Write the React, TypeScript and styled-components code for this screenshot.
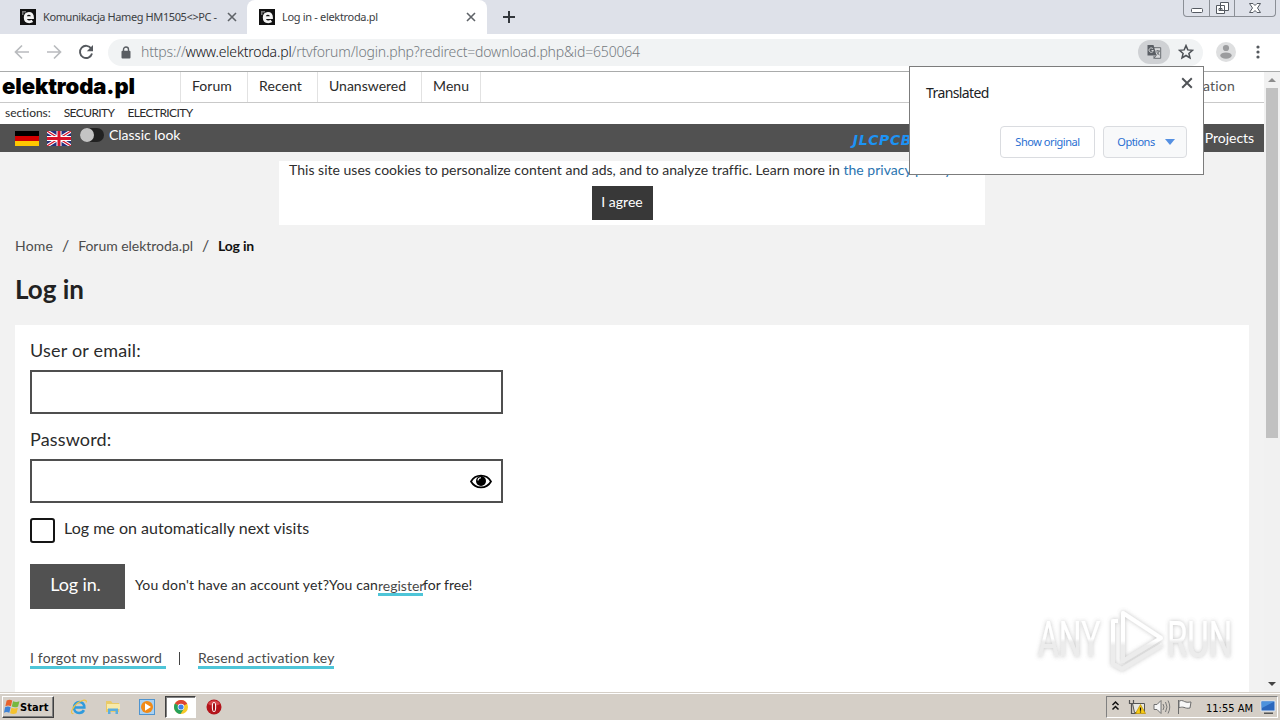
import React from "react";
import styled, { createGlobalStyle } from "styled-components";

const GlobalStyle = createGlobalStyle`
  * { box-sizing: border-box; }
  body { margin: 0; overflow: hidden; background: #fff; }
  button, input { font: inherit; border-radius: 0; margin: 0; }
`;

const ui = `"Noto Sans", "Open Sans", sans-serif`;

const Screen = styled.div`
  position: relative;
  width: 1280px;
  height: 720px;
  display: flex;
  flex-direction: column;
  overflow: hidden;
  font-family: Lato, sans-serif;
  color: #2b2b2b;
  white-space: nowrap;
`;

/* A run of text with tuned size and tracking */
const Label = styled.span<{ $size?: number; $track?: number; $color?: string; $weight?: number }>`
  font-size: ${(p) => p.$size ?? 14}px;
  letter-spacing: ${(p) => p.$track ?? 0}px;
  font-weight: ${(p) => p.$weight ?? 400};
  ${(p) => p.$color && `color: ${p.$color};`}
  white-space: pre;
`;

/* ---------- browser frame ---------- */
const TabStrip = styled.div`
  height: 34px;
  flex: none;
  display: flex;
  background: #dee1e9;
  font-family: ${ui};
`;

const Tab = styled.div<{ $active?: boolean }>`
  width: ${(p) => (p.$active ? 240 : 247)}px;
  padding: 0 ${(p) => (p.$active ? 11 : 10)}px 0 ${(p) => (p.$active ? 12 : 20)}px;
  display: flex;
  align-items: center;
  background: ${(p) => (p.$active ? "#fff" : "transparent")};
  border-radius: 8px 8px 0 0;
  color: #3c4043;
`;

const TabTitle = styled.div`
  flex: 1;
  margin-left: 7px;
  padding-bottom: 2px;
  overflow: hidden;
  line-height: 20px;
`;

const NewTab = styled.div`
  padding-left: 16px;
  flex: 1;
  display: flex;
  align-items: center;
`;

const WindowButtons = styled.div`
  width: 93px;
  height: 17px;
  margin-right: 4px;
  display: flex;
  border: 1px solid #8b8f96;
  border-top: 0;
  border-radius: 0 0 4px 4px;
`;

const WindowButton = styled.div<{ $w: number }>`
  width: ${(p) => p.$w}px;
  display: flex;
  justify-content: center;
  & + & { border-left: 1px solid #8b8f96; }
`;

const Toolbar = styled.div`
  height: 38px;
  flex: none;
  display: flex;
  align-items: center;
  padding: 0 20px 1px 14px;
  border-bottom: 1px solid #a9abab;
  background: #fff;
`;

const NavIcons = styled.div`
  display: flex;
  gap: 16px;
  width: 94px;
`;

const Omnibox = styled.div`
  width: 1095px;
  flex: none;
  height: 27px;
  border-radius: 14px;
  background: #f1f3f4;
  display: flex;
  align-items: center;
  padding: 0 9px 0 13px;
  font-family: ${ui};
  color: #747a80;
`;

const Url = styled.div`
  flex: 1;
  margin-left: 10px;
  padding-bottom: 2px;
  line-height: 24px;
  b { font-weight: inherit; color: #111214; }
`;

const TranslateBadge = styled.div`
  width: 32px;
  height: 24px;
  border-radius: 12px;
  margin-right: 8px;
  background: #cfd1d4;
  display: flex;
  align-items: center;
  justify-content: center;
`;

const ToolbarEnd = styled.div`
  flex: 1;
  display: flex;
  align-items: center;
  justify-content: space-between;
  margin-left: 13px;
`;

/* ---------- web page ---------- */
const Viewport = styled.div`
  height: 620px;
  flex: none;
  display: flex;
`;

const Page = styled.div`
  width: 1264px;
  height: 620px;
  overflow: hidden;
  background: #f2f2f2;
`;

const SiteHeader = styled.header`
  height: 31px;
  display: flex;
  background: #fff;
  border-bottom: 1px solid #c9c9c9;
`;

const Logo = styled.div`
  width: 180px;
  padding-left: 2px;
  font: 900 22px/28px Inter, sans-serif;
  letter-spacing: -0.1px;
  color: #000;
`;

const NavItem = styled.a<{ $w: number }>`
  width: ${(p) => p.$w}px;
  padding-left: 11px;
  line-height: 26px;
  border-left: 1px solid #e2e2e2;
`;

const HeaderRest = styled.div`
  flex: 1;
  border-left: 1px solid #e2e2e2;
  text-align: right;
  line-height: 26px;
  padding-right: 29px;
`;

const Sections = styled.div`
  height: 21px;
  padding-left: 5px;
  display: flex;
  gap: 13px;
  line-height: 20px;
  background: #fff;
`;

const DarkBar = styled.div`
  height: 28px;
  padding: 0 10px 0 15px;
  display: flex;
  align-items: center;
  background: #515151;
  color: #fff;
`;

const Flags = styled.div`
  display: flex;
  gap: 8px;
  margin-right: 9px;
`;

const Toggle = styled.div`
  width: 24px;
  height: 14px;
  margin: 0 5px 6px 0;
  border-radius: 7px;
  background: #222;
  &::before {
    content: "";
    display: block;
    width: 14px;
    height: 14px;
    border-radius: 7px;
    background: #c4c4c4;
  }
`;

const BarText = styled.div<{ $lift: number }>`
  line-height: 20px;
  padding-bottom: ${(p) => p.$lift}px;
`;

const Sponsor = styled.div`
  margin-left: auto;
  width: 352px;
  padding-top: 3px;
  font: italic 700 14px/20px "DejaVu Sans", sans-serif;
  letter-spacing: 0.6px;
  color: #1c93f5;
`;

const Cookies = styled.div`
  width: 706px;
  height: 64px;
  margin: 9px 0 0 279px;
  background: #fff;
  display: flex;
  flex-direction: column;
  align-items: center;
  color: #2e2e2e;
`;

const CookieText = styled.div`
  align-self: stretch;
  padding-left: 10px;
  height: 25px;
  line-height: 15px;
  a { color: #2a74b0; }
`;

const Agree = styled.button`
  width: 61px;
  height: 34px;
  margin-right: 20px;
  padding: 0 0 3px;
  border: 0;
  background: #383838;
  color: #fff;
  line-height: 30px;
`;

const Crumbs = styled.nav`
  padding: 10px 0 0 15px;
  height: 42px;
  line-height: 22px;
  display: flex;
  color: #4c4c4c;
`;

const Slash = styled.span`
  width: 25px;
  text-align: center;
  font-size: 16px;
  line-height: 20px;
`;

const Title = styled.h1`
  margin: 0;
  height: 58px;
  padding: 5px 0 0 15px;
  font-size: 26px;
  line-height: 34px;
  font-weight: 700;
  color: #222;
`;

const Card = styled.main`
  width: 1234px;
  height: 380px;
  margin-left: 15px;
  padding: 15px;
  background: #fff;
`;

const FieldLabel = styled.label`
  display: block;
  height: 30px;
  line-height: 20px;
`;

const Field = styled.div`
  width: 473px;
  height: 44px;
  margin-bottom: 15px;
  padding-right: 9px;
  border: 2px solid #4f4f4f;
  display: flex;
  align-items: center;
  justify-content: flex-end;
`;

const Remember = styled.div`
  height: 46px;
  display: flex;
  gap: 9px;
  line-height: 20px;
`;

const CheckBox = styled.div`
  width: 25px;
  height: 25px;
  border: 2px solid #151515;
  border-radius: 3px;
`;

const SubmitRow = styled.div`
  height: 45px;
  display: flex;
  align-items: center;
  gap: 10px;
`;

const Submit = styled.button`
  width: 95px;
  height: 45px;
  padding: 0 4px 5px 0;
  border: 0;
  background: #515151;
  color: #fff;
`;

const SignUp = styled.div`
  display: flex;
  height: 20px;
  line-height: 18px;
  margin-top: -1px;
`;

const Underlined = styled.a<{ $w: number; $leading?: number }>`
  width: ${(p) => p.$w}px;
  display: block;
  height: 20px;
  line-height: ${(p) => p.$leading ?? 15}px;
  border-bottom: 3px solid #4ec5d8;
  color: #4a4a4a;
`;

const Links = styled.div`
  display: flex;
  margin-top: 40px;
`;

const Divider = styled.div`
  width: 1px;
  height: 13px;
  margin: 3px 18px 0 13px;
  background: #444;
`;

const Scrollbar = styled.div`
  width: 16px;
  background: #f1f1f1;
  display: flex;
  flex-direction: column;
  align-items: center;
  justify-content: space-between;
`;

const ScrollThumb = styled.div`
  width: 12px;
  height: 350px;
  margin-bottom: auto;
  background: #c1c1c1;
`;

/* ---------- overlays ---------- */
const Popup = styled.div`
  position: absolute;
  left: 909px;
  top: 66px;
  width: 295px;
  height: 109px;
  padding: 10px 16px 16px;
  display: flex;
  flex-direction: column;
  justify-content: space-between;
  background: #fff;
  border: 1px solid #7c7c7c;
  font-family: ${ui};
  color: #202124;
`;

const PopupHead = styled.div`
  display: flex;
  justify-content: space-between;
  line-height: 31px;
  margin-right: -6px;
`;

const PopupActions = styled.div`
  display: flex;
  justify-content: flex-end;
  gap: 8px;
`;

const PopupButton = styled.button<{ $w: number; $tint?: boolean }>`
  width: ${(p) => p.$w}px;
  height: 32px;
  padding: 0 0 1px ${(p) => (p.$tint ? 2 : 0)}px;
  display: flex;
  align-items: center;
  justify-content: center;
  gap: 10px;
  border: 1px solid #dadce0;
  border-radius: 4px;
  background: ${(p) => (p.$tint ? "#f8f9fa" : "#fff")};
  color: #2a6fd2;
`;

const Watermark = styled.div`
  position: absolute;
  left: 1032px;
  top: 604px;
`;

/* ---------- taskbar ---------- */
const Taskbar = styled.div`
  height: 28px;
  flex: none;
  display: flex;
  align-items: center;
  padding: 1px 2px 0;
  background: #d5cfc7;
  border-top: 1px solid #d5cfc7;
  box-shadow: inset 0 1px 0 #fff;
  font-family: "DejaVu Sans Condensed", "DejaVu Sans", sans-serif;
  color: #000;
`;

const Start = styled.div`
  width: 52px;
  height: 22px;
  display: flex;
  align-items: center;
  padding-left: 1px;
  border: 1px solid;
  border-color: #fff #404040 #404040 #fff;
  box-shadow: inset -1px -1px 0 #808080;
`;

const Launchers = styled.div`
  display: flex;
  align-items: center;
  margin-left: 8px;
  flex: 1;
`;

const Launcher = styled.div<{ $pressed?: boolean }>`
  width: ${(p) => (p.$pressed ? 31 : 34)}px;
  height: 22px;
  margin-left: ${(p) => (p.$pressed ? 1 : 0)}px;
  display: flex;
  align-items: center;
  justify-content: center;
  ${(p) =>
    p.$pressed &&
    `margin-right: 1px; background: #fff; border: 1px solid; border-color: #404040 #fff #fff #404040; box-shadow: inset 1px 1px 0 #808080;`}
`;

const Tray = styled.div`
  width: 172px;
  height: 22px;
  display: flex;
  align-items: center;
  padding: 0 1px 0 4px;
  border: 1px solid;
  border-color: #808080 #fff #fff #808080;
`;

const Clock = styled.div`
  margin: 0 7px 2px auto;
`;

/* ---------- drawings ---------- */
const Favicon = () => (
  <svg width="16" height="16" viewBox="0 0 16 16">
    <path fill="#111" d="M0 0h16v16H0z" />
    <path fill="none" stroke="#f4f4f4" strokeWidth="2.800" d="M5.300 8.600h7.200c0-2.800-1.300-4.300-3.600-4.300S5.200 6 5.200 8.600c0 2.900 1.500 4.200 4 4.200 1.300 0 2.300-.3 3.200-.9" />
    <path fill="#777" d="M2 2h4v1.500H3.500V6H2z" />
  </svg>
);

const Cross = ({ size, color = "#5f6368", weight = 1.6 }: { size: number; color?: string; weight?: number }) => (
  <svg width={size} height={size} viewBox="0 0 10 10">
    <path d="M1 1l8 8M9 1l-8 8" stroke={color} strokeWidth={weight} />
  </svg>
);

const Arrow = ({ flip }: { flip?: boolean }) => (
  <svg width="16" height="16" viewBox="0 0 16 16" fill="none" stroke="#b9bbbe" strokeWidth="1.700">
    <path d={flip ? "M1 8h13M8 1.500L14.500 8 8 14.500" : "M15 8H2M8 1.500L1.500 8 8 14.500"} />
  </svg>
);

const Reload = () => (
  <svg width="16" height="16" viewBox="0 0 16 16">
    <path d="M13.300 4.700A6.100 6.100 0 1 0 14 9.500" fill="none" stroke="#55595e" strokeWidth="1.900" />
    <path d="M15 1v6.200H8.800z" fill="#55595e" />
  </svg>
);

const Lock = () => (
  <svg width="10" height="13" viewBox="0 0 10 13">
    <path d="M2.500 6V3.500a2.500 2.500 0 0 1 5 0V6" fill="none" stroke="#5a5e63" strokeWidth="1.400" />
    <rect x="0.500" y="4.800" width="9" height="7.700" rx="1" fill="#5a5e63" />
  </svg>
);

const TranslateIcon = () => (
  <svg width="16" height="16" viewBox="0 0 16 16">
    <path d="M7.500 3.700h7.200v10.600H8.500" fill="#d9dadc" stroke="#6a6e73" />
    <path d="M1.500 1h6l3 10.500H1.500z" fill="#5a5e64" />
    <path d="M6.900 4.700A2.200 2.200 0 1 0 7.400 6.500H5.500" fill="none" stroke="#d5d6d8" />
    <path d="M9.500 7h4.500M11.800 6v1M13.200 7c-.4 1.800-1.500 3-2.800 4M10.700 8l2.800 3.300M8 12v2.500l2-3" fill="none" stroke="#5f6368" strokeWidth=".9" />
  </svg>
);

const Star = () => (
  <svg width="16" height="16" viewBox="0 0 16 16" fill="none" stroke="#4d5156" strokeWidth="1.500">
    <path d="M8 1.600l1.800 4.300 4.700.4-3.600 3.100 1.100 4.600L8 11.500 4 14l1.100-4.600L1.500 6.300l4.700-.4z" />
  </svg>
);

const Avatar = () => (
  <svg width="20" height="20" viewBox="0 0 20 20">
    <circle cx="10" cy="10" r="10" fill="#dedfe0" />
    <circle cx="10" cy="6" r="3.100" fill="#9b9c9e" />
    <ellipse cx="10" cy="13.600" rx="5.700" ry="3.200" fill="#9b9c9e" />
  </svg>
);

const Dots = () => (
  <svg width="4" height="14" viewBox="0 0 4 14" fill="#55595e">
    <circle cx="2" cy="2" r="1.600" />
    <circle cx="2" cy="7" r="1.600" />
    <circle cx="2" cy="12" r="1.600" />
  </svg>
);

const Triangle = ({ up, w, h, color }: { up?: boolean; w: number; h: number; color: string }) => (
  <svg width={w} height={h} viewBox="0 0 10 5" preserveAspectRatio="none">
    <path d={up ? "M0 5L5 0l5 5z" : "M0 0l5 5 5-5z"} fill={color} />
  </svg>
);

const ScrollArrow = styled.div`
  height: 16px;
  display: flex;
  align-items: center;
`;

const German = () => (
  <svg width="24" height="15" viewBox="0 0 24 15">
    <path fill="#000" d="M0 0h24v5H0z" />
    <path fill="#d40000" d="M0 5h24v5H0z" />
    <path fill="#ffc800" d="M0 10h24v5H0z" />
  </svg>
);

const British = () => (
  <svg width="24" height="15" viewBox="0 0 24 15">
    <path fill="#25307c" d="M0 0h24v15H0z" />
    <path stroke="#fff" strokeWidth="3.200" d="M0 0l24 15M24 0L0 15" />
    <path stroke="#d8142b" strokeWidth="1.200" d="M0 0l24 15M24 0L0 15" />
    <path stroke="#fff" strokeWidth="5" d="M12 0v15M0 7.500h24" />
    <path stroke="#d8142b" strokeWidth="3" d="M12 0v15M0 7.500h24" />
  </svg>
);

const Eye = () => (
  <svg width="22" height="15" viewBox="0 0 22 15">
    <path d="M1 7.500C5.500-.4 16.500-.4 21 7.500 16.500 15.400 5.500 15.400 1 7.500z" fill="#fff" stroke="#000" strokeWidth="1.700" />
    <circle cx="11" cy="7" r="5" fill="#000" />
    <path d="M8 6.500a3 3 0 0 1 3-2.700" fill="none" stroke="#fff" strokeWidth="1.100" />
  </svg>
);

const WindowsFlag = () => (
  <svg width="16" height="16" viewBox="0 0 15 15">
    <path fill="#e8622c" d="M2.500 1.500c2-1.200 3.500-1 5.200 0L6.500 6.800c-1.800-1-3.400-1-5.200 0z" />
    <path fill="#76b83f" d="M8.500 2c2 1 3.800 1 6 0l-1.300 5c-2 1.200-3.900 1-5.900.1z" />
    <path fill="#3f83d6" d="M1 7.800c1.900-1 3.500-1 5.200 0L5 13c-2-1-3.400-1-5 0z" />
    <path fill="#f5c22e" d="M7 8.200c2 1 3.900 1 6 0L11.700 13.300c-2.100 1-3.900 1-6 0z" />
  </svg>
);

const InternetExplorer = () => (
  <svg width="18" height="18" viewBox="0 0 18 18" fill="none">
    <path d="M4 9.500h10.300c0-3.500-2-5.500-5-5.500S4 6.500 4 9.700s2.200 5.300 5.200 5.300c2.200 0 3.800-1 4.700-2.800" stroke="#2f9bdd" strokeWidth="2.600" />
    <path d="M3.500 15.500C-.5 16.500 2 9 8 4.800 12 2 17 .5 16.300 4.500" stroke="#efc343" strokeWidth="1.200" />
  </svg>
);

const Explorer = () => (
  <svg width="16" height="16" viewBox="0 0 16 16">
    <path d="M1 2h5l1.500 2H14v9H1z" fill="#e9ca68" />
    <path d="M2 5h13v5H2z" fill="#f8eaa8" />
    <path d="M3 15V9.500h10V15h-2.500v-3h-5v3z" fill="#5caede" />
  </svg>
);

const MediaPlayer = () => (
  <svg width="16" height="16" viewBox="0 0 16 16">
    <rect x=".5" y=".5" width="15" height="15" fill="#a9d1f2" stroke="#4f94cf" />
    <circle cx="8" cy="8" r="6" fill="#f18a17" />
    <path d="M6 4.200v7.600L12 8z" fill="#fff" />
  </svg>
);

const Chrome = () => (
  <svg width="14" height="14" viewBox="0 0 14 14">
    <circle cx="7" cy="7" r="7" fill="#f7c927" />
    <path d="M7 7L.9 3.600A7 7 0 0 1 13.200 3.800z" fill="#dd4434" />
    <path d="M7 7L.9 3.600A7 7 0 0 0 6.500 14L10 8.500z" fill="#26a05a" />
    <circle cx="7" cy="7" r="3.300" fill="#fff" />
    <circle cx="7" cy="7" r="2.600" fill="#3f80e8" />
  </svg>
);

const Opera = () => (
  <svg width="16" height="16" viewBox="0 0 16 16">
    <circle cx="8" cy="8" r="7.500" fill="#b3141b" />
    <path d="M2 5a7 7 0 0 1 12 0c-3 2-9 2-12 0z" fill="#d7464a" />
    <ellipse cx="8" cy="8" rx="2.200" ry="5" fill="#fff" />
    <ellipse cx="8" cy="8" rx="1.100" ry="4.200" fill="#a30d14" />
  </svg>
);

const TrayIcons = () => (
  <svg width="82" height="18" viewBox="0 0 82 18" fill="none">
    <path d="M1.500 7L4.500 4l3 3M1.500 11.500l3-3 3 3" stroke="#111" strokeWidth="1.500" />
    <path d="M21.500 5.500h12v9h-10z" fill="#e7e7e1" stroke="#555" />
    <path d="M18.500 2v3.500h4V2M20.500 5.500v10h5" stroke="#555" strokeWidth="1.200" />
    <path d="M29.500 6.500l5 9h-10z" fill="#f8cb13" stroke="#b98c00" strokeWidth=".7" />
    <path d="M29.500 9.500v3.200M29.500 13.500v1" stroke="#111" strokeWidth="1.200" />
    <path d="M43 6.500h3l4-4v13l-4-4h-3z" fill="#f6f6f6" stroke="#707070" />
    <path d="M52 6q2 3 0 6M54.500 4q3 5 0 10M57 2.500q3.500 6.500 0 13" stroke="#777" />
    <path d="M67.500 2v14M68 3c4-1.500 5 1 7 1 1.500.5 2 .2 5 0l-1 6c-3 .6-4 0-6-.6-2-.5-3-.2-5 .3z" fill="#f7f7f7" stroke="#6c6c6c" />
  </svg>
);

const Desktop = () => (
  <svg width="16" height="15" viewBox="0 0 16 15">
    <path d="M1 1h14v10H1z" fill="#2a67bd" stroke="#dce8f5" />
    <path d="M1.500 1.500h13L2 8z" fill="#4c92dd" />
    <path d="M4 12.500h9v1.500H4z" fill="#555" />
  </svg>
);

const WatermarkArt = () => (
  <svg width="230" height="80" viewBox="0 0 230 80">
    <defs>
      <filter id="glow" x="-10%" y="-10%" width="120%" height="120%">
        <feDropShadow dx="0" dy="0" stdDeviation="2.200" floodColor="#777" floodOpacity=".45" />
      </filter>
      <linearGradient id="fade" x1="0" y1="0" x2="0" y2="1">
        <stop offset=".48" stopColor="#fff" />
        <stop offset=".54" stopColor="#ececec" />
      </linearGradient>
      <linearGradient id="fadeMark" gradientUnits="userSpaceOnUse" x1="0" y1="8" x2="0" y2="68">
        <stop offset=".48" stopColor="#fff" />
        <stop offset=".56" stopColor="#ececec" />
      </linearGradient>
    </defs>
    <g filter="url(#glow)" fill="url(#fade)" fontFamily="Roboto, sans-serif" fontWeight="400" fontSize="50">
      <text transform="translate(6 53) scale(.64 1)">ANY</text>
      <text transform="translate(135 53) scale(.66 1)">RUN</text>
      <g fill="none" stroke="url(#fadeMark)" strokeWidth="4" strokeLinejoin="round">
        <path d="M91 9v48l38-23z" />
        <path d="M86 17h-5v43l9 5 40-24" />
      </g>
    </g>
  </svg>
);

const WindowGlyphs = ({ kind }: { kind: "min" | "restore" | "close" }) => (
  <svg width="14" height="16" viewBox="0 0 14 16" fill="#fff" stroke="#555a62">
    {kind === "min" && <rect x="1.500" y="8.500" width="11" height="4" rx="1" />}
    {kind === "restore" && <path d="M5.500 2.500h8v8h-8zM1.500 5.500h8v8h-8zM4 8.500h3v2H4z" />}
    {kind === "close" && <path d="M1.500 3.500h3.500l2 2 2-2h3.500L9.500 8l3 4.500H9l-2-2-2 2H1.500l3-4.500z" />}
  </svg>
);

export default function App() {
  return (
    <Screen>
      <GlobalStyle />
      <TabStrip>
        <Tab>
          <Favicon />
          <TabTitle><Label $size={11} $track={-0.4}>Komunikacja Hameg HM1505&lt;&gt;PC -</Label></TabTitle>
          <Cross size={10} />
        </Tab>
        <Tab $active>
          <Favicon />
          <TabTitle><Label $size={11} $track={-0.32}>Log in - elektroda.pl</Label></TabTitle>
          <Cross size={10} />
        </Tab>
        <NewTab>
          <svg width="12" height="12" viewBox="0 0 12 12" stroke="#33373c" strokeWidth="2">
            <path d="M6 0v12M0 6h12" />
          </svg>
        </NewTab>
        <WindowButtons>
          <WindowButton $w={25}><WindowGlyphs kind="min" /></WindowButton>
          <WindowButton $w={25}><WindowGlyphs kind="restore" /></WindowButton>
          <WindowButton $w={41}><WindowGlyphs kind="close" /></WindowButton>
        </WindowButtons>
      </TabStrip>

      <Toolbar>
        <NavIcons><Arrow /><Arrow flip /><Reload /></NavIcons>
        <Omnibox>
          <Lock />
          <Url><Label $size={14} $track={-0.17} $weight={300}>https://<b>www.elektroda.pl</b>/rtvforum/login.php?redirect=download.php&amp;id=650064</Label></Url>
          <TranslateBadge><TranslateIcon /></TranslateBadge>
          <Star />
        </Omnibox>
        <ToolbarEnd><Avatar /><Dots /></ToolbarEnd>
      </Toolbar>

      <Viewport>
        <Page>
          <SiteHeader>
            <Logo>elektroda.pl</Logo>
            <NavItem $w={67}><Label $track={0.05}>Forum</Label></NavItem>
            <NavItem $w={70}><Label $track={0.1}>Recent</Label></NavItem>
            <NavItem $w={104}><Label $track={0}>Unanswered</Label></NavItem>
            <NavItem $w={59}><Label $track={0.1}>Menu</Label></NavItem>
            <HeaderRest><Label $track={0.2} $color="#555">Registration</Label></HeaderRest>
          </SiteHeader>
          <Sections>
            <Label $size={12} $track={-0.05}>sections:</Label>
            <Label $size={12} $track={-0.6}>SECURITY</Label>
            <Label $size={12} $track={-0.6}>ELECTRICITY</Label>
          </Sections>
          <DarkBar>
            <Flags><German /><British /></Flags>
            <Toggle />
            <BarText $lift={7}><Label $track={-0.02}>Classic look</Label></BarText>
            <Sponsor>JLCPCB</Sponsor>
            <BarText $lift={2}><Label $track={-0.05}>Projects</Label></BarText>
          </DarkBar>
          <Cookies>
            <CookieText>
              <Label $track={0.02}>This site uses cookies to personalize content and ads, and to analyze traffic. Learn more in <a>the privacy policy</a></Label>
            </CookieText>
            <Agree><Label>I agree</Label></Agree>
          </Cookies>
          <Crumbs>
            <Label $track={0.2}>Home</Label>
            <Slash>/</Slash>
            <Label $track={-0.03}>Forum elektroda.pl</Label>
            <Slash>/</Slash>
            <Label $weight={700} $track={-0.2} $color="#111">Log in</Label>
          </Crumbs>
          <Title>Log in</Title>
          <Card>
            <FieldLabel><Label $size={18} $track={0.2}>User or email:</Label></FieldLabel>
            <Field />
            <FieldLabel><Label $size={18} $track={0.15}>Password:</Label></FieldLabel>
            <Field><Eye /></Field>
            <Remember>
              <CheckBox />
              <Label $size={16} $track={0.02}>Log me on automatically next visits</Label>
            </Remember>
            <SubmitRow>
              <Submit><Label $size={18} $track={-0.15}>Log in.</Label></Submit>
              <SignUp>
                <Label $track={0.14}>You don't have an account yet?You can</Label>
                <Underlined $w={45} $leading={17}><Label>register</Label></Underlined>
                <Label>for free!</Label>
              </SignUp>
            </SubmitRow>
            <Links>
              <Underlined $w={136}><Label $track={0.16}>I forgot my password</Label></Underlined>
              <Divider />
              <Underlined $w={136}><Label $track={0.16}>Resend activation key</Label></Underlined>
            </Links>
          </Card>
        </Page>
        <Scrollbar>
          <ScrollArrow><Triangle up w={8} h={4} color="#8d8d8d" /></ScrollArrow>
          <ScrollThumb />
          <ScrollArrow><Triangle w={8} h={4} color="#444" /></ScrollArrow>
        </Scrollbar>
      </Viewport>

      <Taskbar>
        <Start><WindowsFlag /><Label $size={11} $weight={700} $track={0.1}>Start</Label></Start>
        <Launchers>
          <Launcher><InternetExplorer /></Launcher>
          <Launcher><Explorer /></Launcher>
          <Launcher><MediaPlayer /></Launcher>
          <Launcher $pressed><Chrome /></Launcher>
          <Launcher><Opera /></Launcher>
        </Launchers>
        <Tray>
          <TrayIcons />
          <Clock><Label $size={11}>11:55 AM</Label></Clock>
          <Desktop />
        </Tray>
      </Taskbar>

      <Popup>
        <PopupHead>
          <Label $size={14} $track={-0.6}>Translated</Label>
          <Cross size={12} color="#505357" />
        </PopupHead>
        <PopupActions>
          <PopupButton $w={95}><Label $size={11} $track={-0.45}>Show original</Label></PopupButton>
          <PopupButton $w={84} $tint>
            <Label $size={11} $track={-0.5}>Options</Label>
            <Triangle w={10} h={6} color="#5590e2" />
          </PopupButton>
        </PopupActions>
      </Popup>

      <Watermark><WatermarkArt /></Watermark>
    </Screen>
  );
}
